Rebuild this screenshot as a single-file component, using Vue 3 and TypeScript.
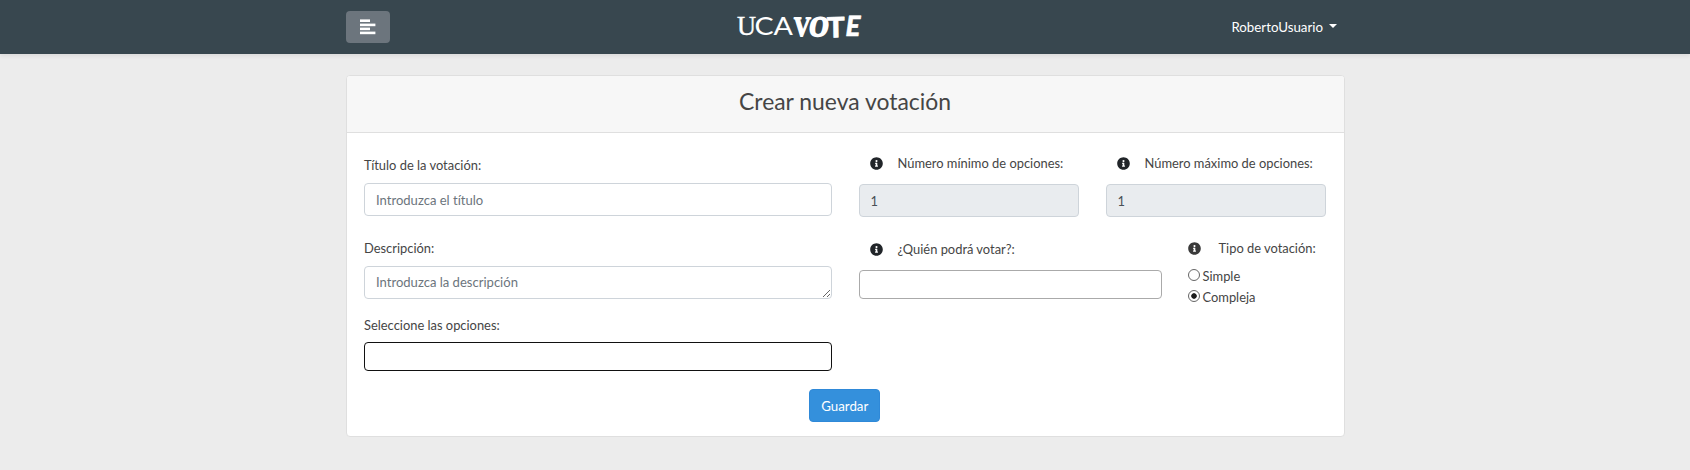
<script setup lang="ts">
import { ref } from 'vue'

type VoteKind = 'simple' | 'compleja'

const title = ref('')
const description = ref('')
const minOptions = ref(1)
const maxOptions = ref(1)
const kind = ref<VoteKind>('compleja')
const kinds: { value: VoteKind; label: string }[] = [
  { value: 'simple', label: 'Simple' },
  { value: 'compleja', label: 'Compleja' },
]
const infoPath =
  'M256 8C119 8 8 119 8 256s111 248 248 248 248-111 248-248S393 8 256 8zm0 110a42 42 0 1 1 0 84 42 42 0 0 1 0-84zm56 254c0 7-5 12-12 12h-88c-7 0-12-5-12-12v-24c0-7 5-12 12-12h12v-64h-12c-7 0-12-5-12-12v-24c0-7 5-12 12-12h64c7 0 12 5 12 12v100h12c7 0 12 5 12 12z'
</script>

<template>
  <div class="page">
    <header class="navbar">
      <div class="bar">
        <button class="toggle" type="button" aria-label="Menú">
          <svg width="16" height="16" viewBox="0 0 16 16" fill="#fff">
            <rect x="0" y="0.4" width="10" height="2.6" />
            <rect x="0" y="4.6" width="15.4" height="2.6" />
            <rect x="0" y="8.6" width="10" height="2.6" />
            <rect x="0" y="12.6" width="15.4" height="2.6" />
          </svg>
        </button>
        <svg class="logo" width="130" height="50" viewBox="0 0 130 50" fill="#fff">
          <text class="serif" x="1" y="33" textLength="19" lengthAdjust="spacingAndGlyphs">U</text>
          <text class="thin" x="18.5" y="33" textLength="38.5" lengthAdjust="spacingAndGlyphs">CA</text>
          <g class="brush">
            <text class="brush-v" transform="translate(57 34) skewX(-3)" textLength="17" lengthAdjust="spacingAndGlyphs">V</text>
            <text class="brush-o" transform="translate(72 34) skewX(-8)" textLength="19.5" lengthAdjust="spacingAndGlyphs">O</text>
            <text transform="translate(91 35.5) rotate(-1)" textLength="18" lengthAdjust="spacingAndGlyphs">T</text>
            <text transform="translate(108.5 33.5) skewX(-8)" textLength="14.5" lengthAdjust="spacingAndGlyphs">E</text>
          </g>
        </svg>
        <div class="user">RobertoUsuario<span class="caret"></span></div>
      </div>
    </header>

    <main class="card">
      <h1 class="card-header">Crear nueva votación</h1>
      <form class="card-body" @submit.prevent>
        <div class="columns">
          <div class="left">
            <label for="title">Título de la votación:</label>
            <input id="title" v-model="title" class="control" placeholder="Introduzca el título" />
            <label for="description" class="desc-label">Descripción:</label>
            <textarea id="description" v-model="description" class="control area" rows="1" placeholder="Introduzca la descripción"></textarea>
            <label for="options" class="opt-label">Seleccione las opciones:</label>
            <input id="options" class="picker focused" />
          </div>
          <div class="right">
            <div class="limits">
              <div>
                <label class="with-info" for="min">
                  <svg class="info" viewBox="0 0 512 512"><path :d="infoPath" /></svg>Número mínimo de opciones:
                </label>
                <input id="min" v-model="minOptions" class="control" disabled />
              </div>
              <div>
                <label class="with-info" for="max">
                  <svg class="info" viewBox="0 0 512 512"><path :d="infoPath" /></svg>Número máximo de opciones:
                </label>
                <input id="max" v-model="maxOptions" class="control" disabled />
              </div>
            </div>
            <div class="audience">
              <div class="who">
                <label class="with-info" for="who">
                  <svg class="info" viewBox="0 0 512 512"><path :d="infoPath" /></svg>¿Quién podrá votar?:
                </label>
                <input id="who" class="picker" />
              </div>
              <div class="kind">
                <div class="kind-title">
                  <svg class="info" viewBox="0 0 512 512"><path :d="infoPath" /></svg>Tipo de votación:
                </div>
                <label v-for="k in kinds" :key="k.value" class="radio">
                  <input v-model="kind" type="radio" name="kind" :value="k.value" />{{ k.label }}
                </label>
              </div>
            </div>
          </div>
        </div>
        <button class="save" type="submit">Guardar</button>
      </form>
    </main>
  </div>
</template>

<style>
body {
  margin: 0;
  background: #ececec;
}
</style>

<style scoped>
.page,
.page * {
  box-sizing: border-box;
}
.page {
  height: 470px;
  overflow: hidden;
  background: #ececec;
  color: #454545;
  font: 12.9px/20px Lato, sans-serif;
  font-variant-ligatures: none;
}
.navbar {
  height: 54px;
  background: #38474f;
  box-shadow: 0 2px 4px rgba(0, 0, 0, 0.075);
}
.bar {
  width: 998px;
  height: 54px;
  margin: 0 auto;
  display: grid;
  grid-template-columns: 390px 130px 1fr;
  align-items: center;
}
.toggle {
  width: 44px;
  height: 32px;
  padding: 0;
  border: 0;
  border-radius: 4px;
  background: #6c757d;
  display: flex;
  align-items: center;
  justify-content: center;
}
.logo {
  overflow: visible;
}
.serif {
  font: 27px 'Liberation Serif', serif;
  stroke: #fff;
  stroke-width: 0.4;
}
.thin {
  font: 25px Lato, sans-serif;
}
.brush {
  font: 900 28px Lato, sans-serif;
  stroke: #fff;
  stroke-width: 0.6;
  stroke-linejoin: round;
}
.brush-v {
  font: bold 28px 'Liberation Serif', serif;
  stroke-width: 1.4;
}
.brush-o {
  font: bold 28px 'Liberation Serif', serif;
  stroke-width: 1.8;
}
.user {
  justify-self: end;
  display: flex;
  align-items: center;
  margin-right: 7px;
  color: #fff;
  font-size: 13.3px;
}
.caret {
  margin: -3px 0 0 6px;
  border: 4px solid transparent;
  border-top: 4px solid #fff;
  border-bottom: 0;
}
.card {
  width: 999px;
  height: 362px;
  margin: 21px auto 0;
  border: 1px solid #dfdfdf;
  border-radius: 4px;
  background: #fff;
  overflow: hidden;
}
.card-header {
  height: 57px;
  margin: 0;
  padding-top: 11px;
  border-bottom: 1px solid #dfdfdf;
  background: #f7f7f7;
  font-size: 22.9px;
  font-weight: 400;
  line-height: 29px;
  text-align: center;
}
.card-body {
  padding: 22px 18px 0 17.5px;
}
.columns {
  display: grid;
  grid-template-columns: 467.5px 467px;
  justify-content: space-between;
}
label {
  display: block;
}
.control,
.picker {
  display: block;
  width: 100%;
  height: 33px;
  margin: 0;
  padding: 0 11px;
  border: 1px solid #ced4da;
  border-radius: 4px;
  background: #fff;
  color: #495057;
  font: inherit;
  outline: 0;
}
.control::placeholder {
  color: #6c757d;
}
.control:disabled {
  background: #e9ecef;
}
.left .control {
  margin-top: 8px;
  font-size: 13.05px;
}
.left .area {
  padding-top: 5px;
  overflow: hidden;
  resize: vertical;
}
.desc-label {
  margin-top: 22px;
}
.opt-label {
  margin-top: 16px;
}
.picker {
  height: 29px;
  border-color: #aaa;
}
.left .picker {
  margin-top: 7px;
}
.focused {
  border-color: #111;
}
.limits {
  display: grid;
  grid-template-columns: 220px 220px;
  justify-content: space-between;
}
.limits .control {
  margin-top: 11px;
}
.with-info {
  display: flex;
  align-items: center;
  padding-left: 11px;
  margin-top: -2px;
}
.info {
  width: 13px;
  height: 13px;
  margin-right: 15px;
  flex: none;
  fill: #212529;
}
.audience {
  display: flex;
  gap: 26px;
  margin-top: 22px;
}
.who {
  width: 303px;
}
.who .with-info {
  margin-top: 0;
}
.who .picker {
  margin-top: 11px;
}
.kind-title {
  display: flex;
  align-items: center;
  margin-top: -1px;
}
.kind-title .info {
  margin-right: 18px;
  fill: #3a3a3a;
}
.radio {
  display: flex;
  height: 21px;
  align-items: center;
}
.kind-title + .radio {
  margin-top: 7px;
}
.radio input {
  appearance: none;
  width: 12px;
  height: 12px;
  margin: -1px 3px 0 0;
  border: 1px solid #666;
  border-radius: 50%;
  background: #fff;
}
.radio input:checked {
  background: radial-gradient(circle, #1c1c1c 2.4px, #fff 3.1px);
}
.save {
  display: block;
  width: 71px;
  height: 33px;
  margin: 18px auto 0;
  padding: 0;
  border: 1px solid #2f89d8;
  border-radius: 4px;
  background: #3490dc;
  color: #fff;
  font: inherit;
  font-size: 13.3px;
}
</style>
